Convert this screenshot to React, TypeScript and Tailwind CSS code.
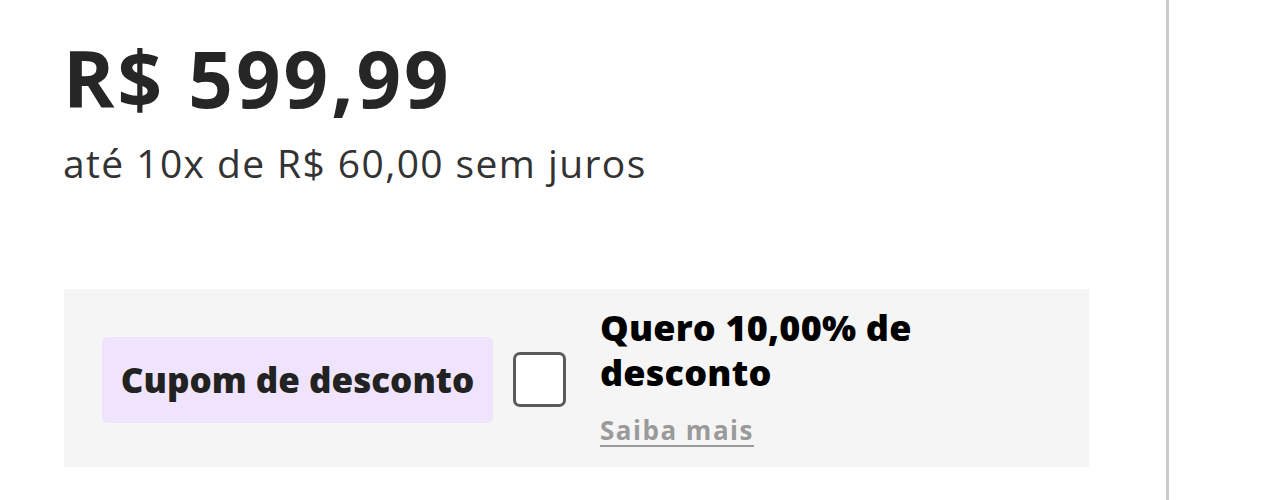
export default function App() {
  return (
    <div className="w-[1272px] h-[500px] bg-white flex overflow-hidden" style={{ fontFamily: '"Open Sans", "Noto Sans", sans-serif' }}>
      <div className="w-[1169px] h-full border-r-[3px] border-[#cbcbcb] pl-[64px] pr-[77px] pt-[39px] shrink-0">
        <div className="text-[78px] font-bold leading-none text-[#262626] tracking-[3px] -ml-[1px]">R$ 599,99</div>
        <div className="mt-[26px] text-[39px] leading-none text-[#333] tracking-[1.4px] -ml-[1px]">até 10x de R$ 60,00 sem juros</div>

        <div className="mt-[107px] bg-[#f5f5f5] h-[178px] pl-[38px] flex">
          <div className="mt-[48px] h-[86px] w-[391px] rounded-[5px] bg-[#f0e4fc] flex items-center justify-center text-[35px] font-extrabold text-[#222]">
            Cupom de desconto
          </div>
          <div className="mt-[63px] ml-[20px] w-[53px] h-[55px] rounded-[7px] border-[3px] border-[#5a5a5a] bg-white shrink-0" />
          <div className="ml-[34px] flex flex-col items-start pt-[16px]">
            <div className="text-[36px] font-extrabold leading-[45px] text-black w-[340px] tracking-[0.2px]">Quero 10,00% de desconto</div>
            <a className="mt-[22px] text-[26px] font-bold text-[#9a9a9a] underline underline-offset-[5px] decoration-2 leading-none tracking-[1.5px]">Saiba mais</a>
          </div>
        </div>
      </div>
    </div>
  );
}
